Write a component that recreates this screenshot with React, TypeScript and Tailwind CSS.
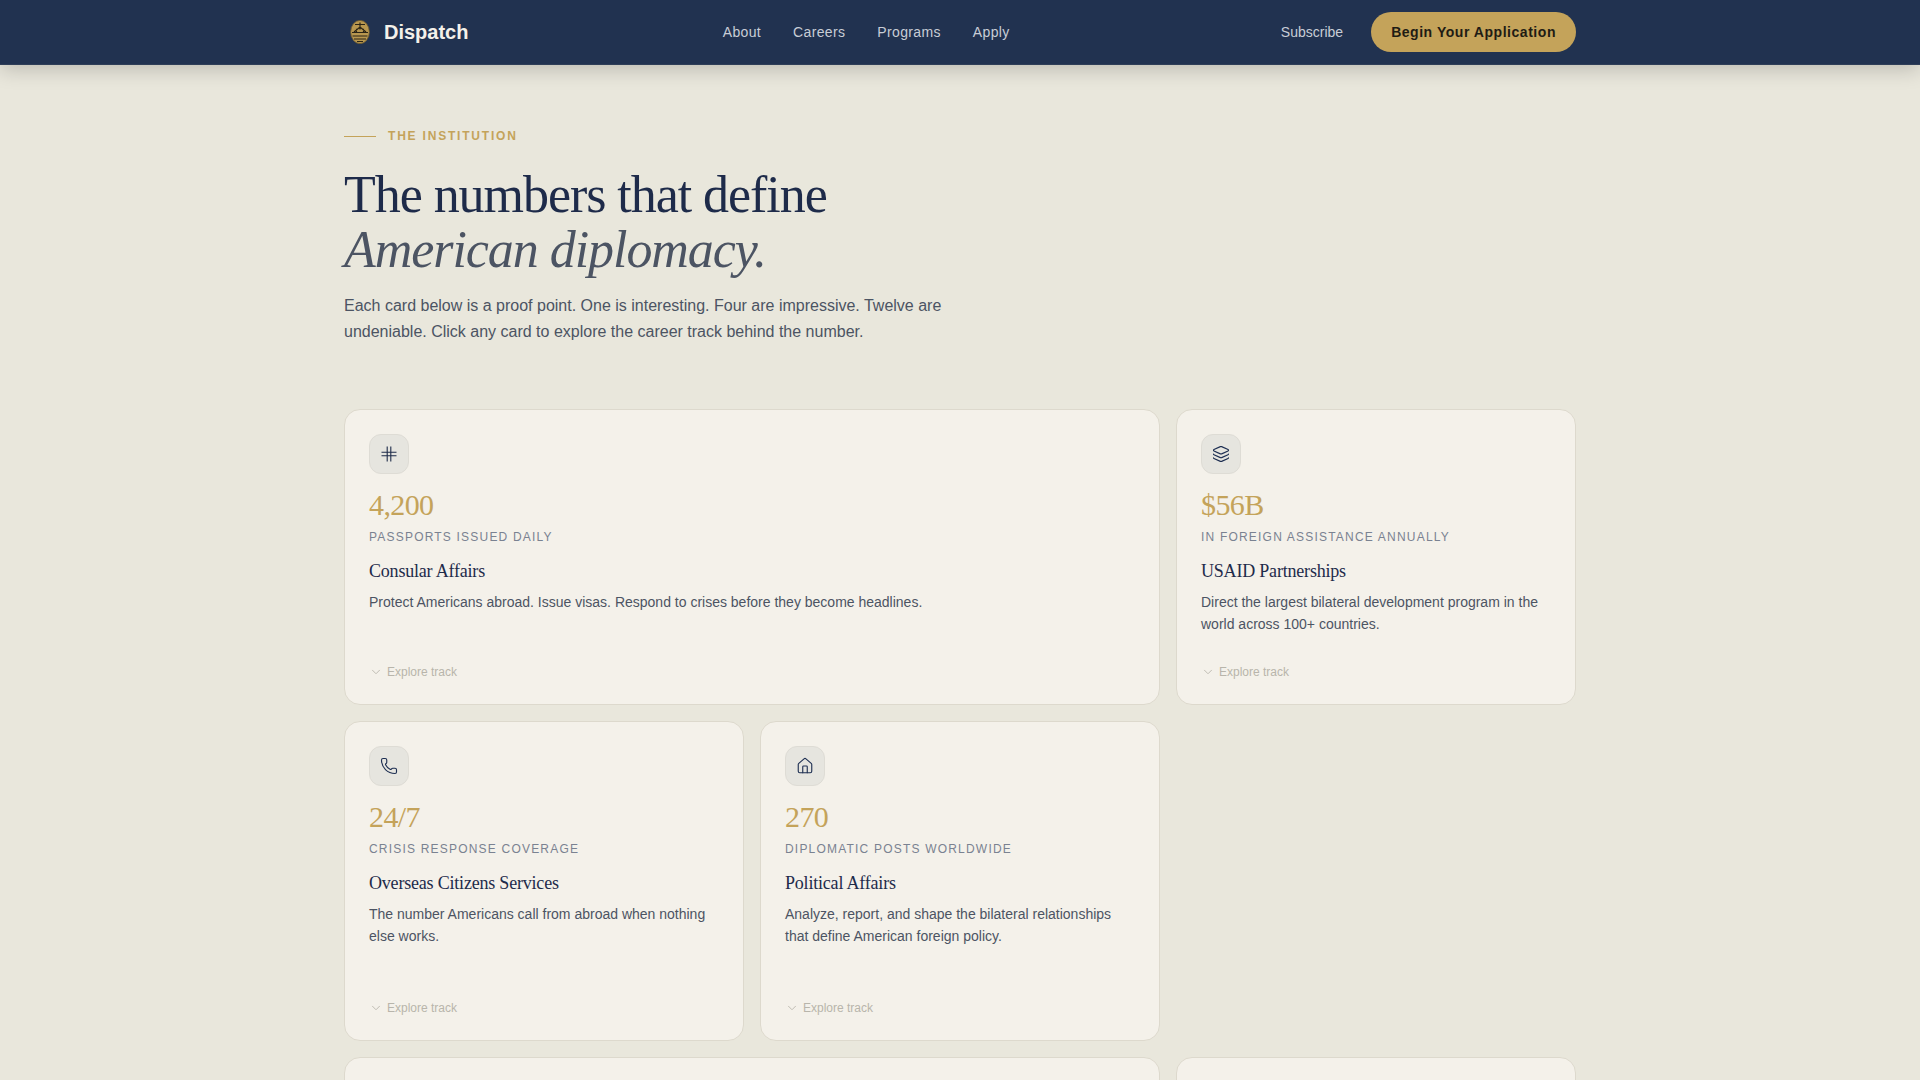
import { ReactNode } from "react";
import { ChevronDown, Layers, Phone, House } from "lucide-react";

const sans = "font-['Liberation_Sans',Arial,sans-serif]";
const serif = "font-['Liberation_Serif','Times_New_Roman',serif]";

const Logo = () => (
  <svg width="20" height="24" viewBox="0 0 20 24" fill="none">
    <ellipse cx="10" cy="12" rx="9.4" ry="11.6" fill="#b8974f" stroke="#6f5a2c" strokeWidth="0.8" />
    <path d="M5 4.5h10M10 2.5v7M4 12l6-5 6 5M6.5 12V8.8M13.5 12V8.8M2 12.5h16M2.5 16h15M4 19h12M7 21.5h6" stroke="#2b2516" strokeWidth="1.2" />
  </svg>
);

const HashIcon = () => (
  <svg width="16" height="16" viewBox="0 0 16 16" fill="none" stroke="#1e2b4a" strokeWidth="1.1">
    <path d="M6.2 0.5v15M9.8 0.5v15M0.5 6.2h15M0.5 9.8h15" />
  </svg>
);

interface CardProps {
  icon: ReactNode;
  stat: string;
  label: string;
  title: string;
  text: string;
  className: string;
}

const Card = ({ icon, stat, label, title, text, className }: CardProps) => (
  <div className={`flex flex-col rounded-2xl border border-[#ddd9cd] bg-[#f4f1ea] p-6 ${className}`}>
    <div className="flex h-10 w-10 items-center justify-center rounded-xl border border-[#dedcd5] bg-[#e6e5df] text-[#1e2f52]">
      {icon}
    </div>
    <div className={`${serif} mt-[13px] text-[30px] leading-9 tracking-[-0.6px] text-[#c4a35a]`}>{stat}</div>
    <div className="mt-[6px] text-xs leading-4 tracking-[1.2px] text-[#7a8291]">{label}</div>
    <h3 className={`${serif} mt-[12px] text-lg leading-7 tracking-[-0.2px] text-[#1e2b4a]`}>{title}</h3>
    <p className="mt-[6px] text-sm leading-[22px] text-[#4c5463]">{text}</p>
    <div className="mt-auto flex items-center gap-1 text-xs leading-4 text-[#b8b5ab]">
      <ChevronDown className="h-[14px] w-[14px]" strokeWidth={1.5} />
      Explore track
    </div>
  </div>
);

export default function App() {
  return (
    <div className={`${sans} h-screen overflow-hidden bg-[#e9e7dc]`}>
      <nav className="relative z-10 h-[65px] border-b border-[#2f3e58] bg-[#213250] shadow-[0_4px_20px_rgba(0,0,0,0.2)]">
        <div className="mx-auto flex h-full max-w-[1280px] items-center justify-between px-6">
          <div className="flex items-center gap-2">
            <div className="flex w-8 justify-center">
              <Logo />
            </div>
            <span className="text-xl font-bold text-[#f4f1ea]">Dispatch</span>
          </div>
          <div className="-ml-[17px] flex items-center gap-8 text-sm tracking-[0.35px] text-[#c8cdd6]">
            <span>About</span>
            <span>Careers</span>
            <span>Programs</span>
            <span>Apply</span>
          </div>
          <div className="flex items-center gap-7">
            <span className="text-sm text-[#c8cdd6]">Subscribe</span>
            <span className="flex h-10 items-center rounded-full bg-[#c4a35a] px-5 text-sm font-bold tracking-[0.54px] text-[#1f1c14]">
              Begin Your Application
            </span>
          </div>
        </div>
      </nav>

      <main className="mx-auto max-w-[1280px] px-6">
        <section className="pt-[63px]">
          <div className="flex items-center gap-3">
            <span className="h-px w-8 bg-[#c4a35a]" />
            <span className="text-xs font-bold tracking-[1.8px] text-[#c4a35a]">THE INSTITUTION</span>
          </div>
          <h1 className={`${serif} mt-[23px] text-[52px] leading-[55px] tracking-[-1.05px] text-[#1e2b4a]`}>
            The numbers that define
            <br />
            <em className="text-[#4c5463]">American diplomacy.</em>
          </h1>
          <p className="mt-[16px] w-[640px] text-base leading-[26px] text-[#4c5463]">
            Each card below is a proof point. One is interesting. Four are impressive. Twelve are undeniable. Click any card to explore the career track behind the number.
          </p>
        </section>

        <section className="mt-[64px] grid grid-cols-3 gap-4">
          <Card
            className="col-span-2 h-[296px]"
            icon={<HashIcon />}
            stat="4,200"
            label="PASSPORTS ISSUED DAILY"
            title="Consular Affairs"
            text="Protect Americans abroad. Issue visas. Respond to crises before they become headlines."
          />
          <Card
            className="h-[296px]"
            icon={<Layers className="h-[18px] w-[18px]" strokeWidth={1.5} />}
            stat="$56B"
            label="IN FOREIGN ASSISTANCE ANNUALLY"
            title="USAID Partnerships"
            text="Direct the largest bilateral development program in the world across 100+ countries."
          />
          <Card
            className="h-[320px]"
            icon={<Phone className="h-[18px] w-[18px]" strokeWidth={1.5} />}
            stat="24/7"
            label="CRISIS RESPONSE COVERAGE"
            title="Overseas Citizens Services"
            text="The number Americans call from abroad when nothing else works."
          />
          <Card
            className="h-[320px]"
            icon={<House className="h-[18px] w-[18px]" strokeWidth={1.5} />}
            stat="270"
            label="DIPLOMATIC POSTS WORLDWIDE"
            title="Political Affairs"
            text="Analyze, report, and shape the bilateral relationships that define American foreign policy."
          />
          <div className="h-[320px]" />
          <div className="col-span-2 h-[296px] rounded-2xl border border-[#ddd9cd] bg-[#f4f1ea]" />
          <div className="h-[296px] rounded-2xl border border-[#ddd9cd] bg-[#f4f1ea]" />
        </section>
      </main>
    </div>
  );
}
